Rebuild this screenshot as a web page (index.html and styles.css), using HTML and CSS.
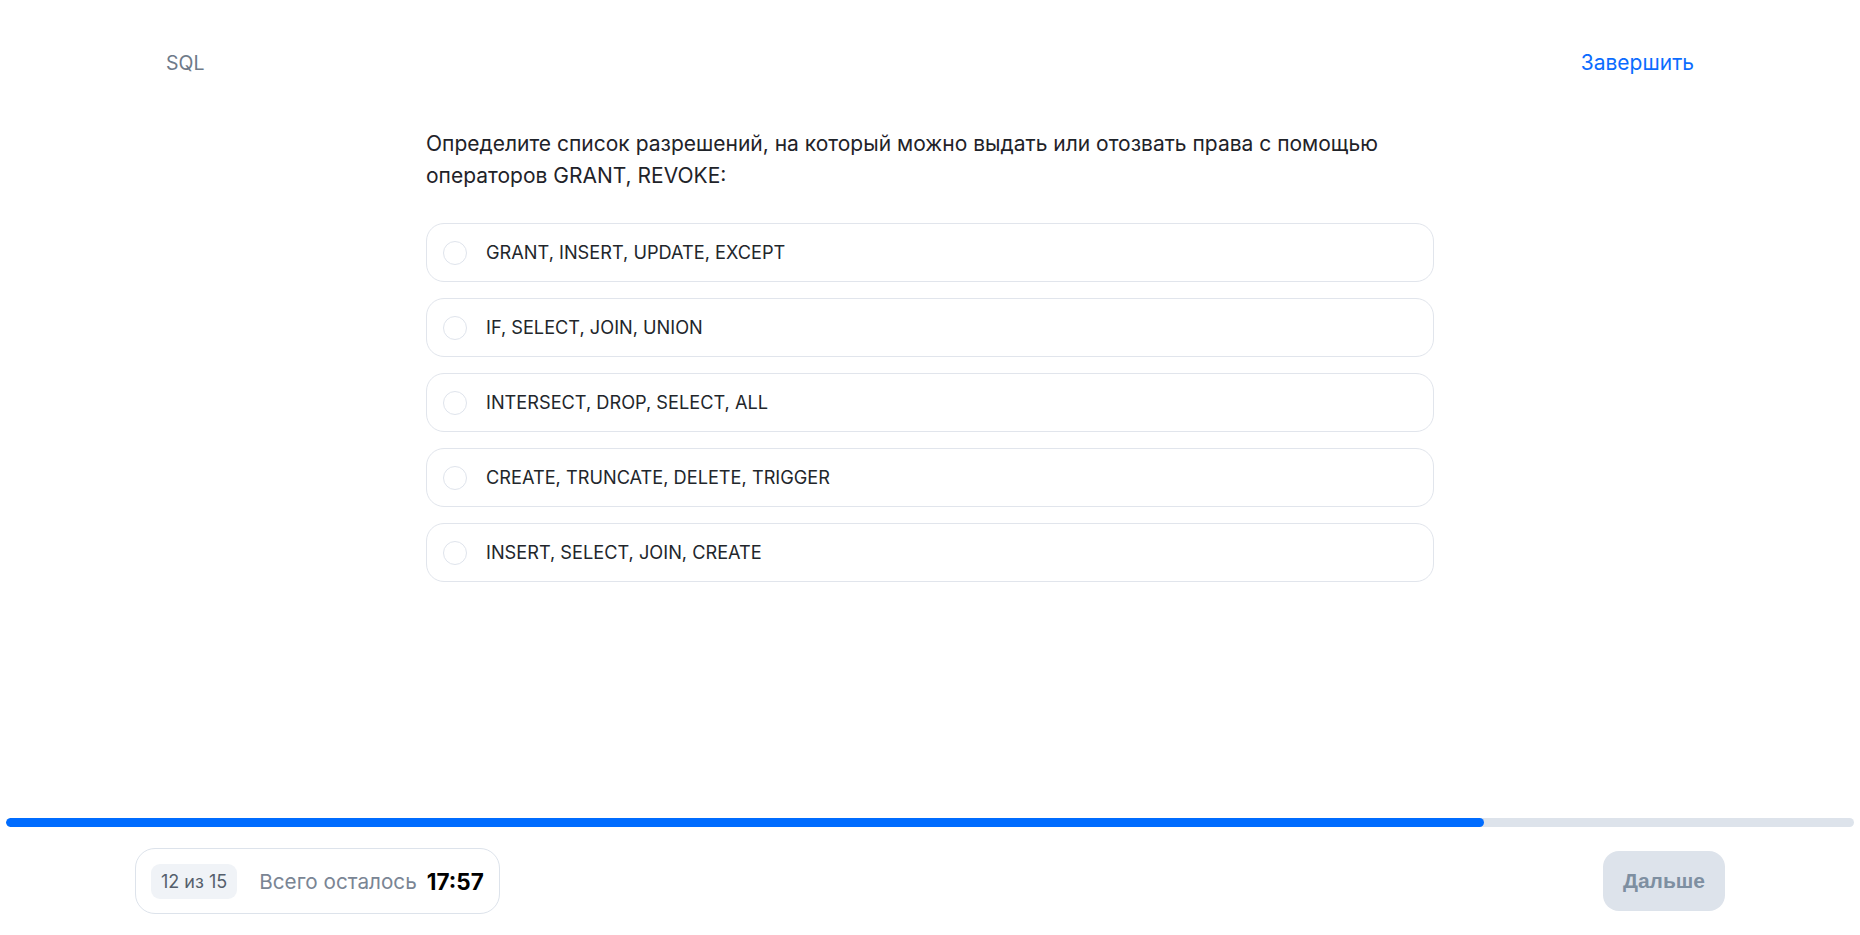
FILE: index.html
```html
<!DOCTYPE html>
<html lang="ru">
<head>
<meta charset="utf-8">
<title>SQL тест</title>
<link rel="stylesheet" href="styles.css">
</head>
<body>
<div class="page">
  <header class="header">
    <span class="subject">SQL</span>
    <a class="finish" href="#">Завершить</a>
  </header>
  <main class="main">
    <div class="quiz">
      <p class="question">Определите список разрешений, на который можно выдать или отозвать права с помощью операторов GRANT, REVOKE:</p>
      <ul class="options">
        <li class="option"><span class="radio"></span><span class="label">GRANT, INSERT, UPDATE, EXCEPT</span></li>
        <li class="option"><span class="radio"></span><span class="label">IF, SELECT, JOIN, UNION</span></li>
        <li class="option"><span class="radio"></span><span class="label">INTERSECT, DROP, SELECT, ALL</span></li>
        <li class="option"><span class="radio"></span><span class="label">CREATE, TRUNCATE, DELETE, TRIGGER</span></li>
        <li class="option"><span class="radio"></span><span class="label">INSERT, SELECT, JOIN, CREATE</span></li>
      </ul>
    </div>
  </main>
  <div class="progress"><div class="progress-fill" style="width: 80%"></div></div>
  <footer class="footer">
    <div class="status">
      <span class="counter">12 из 15</span>
      <span class="remain">Всего осталось</span>
      <span class="time">17:57</span>
    </div>
    <button class="next" type="button">Дальше</button>
  </footer>
</div>
</body>
</html>
```

FILE: styles.css
```css
* { box-sizing: border-box; }
html, body { margin: 0; padding: 0; background: #fff; }
body {
  font-family: Inter, "Noto Sans", sans-serif;
  color: #1f2329;
}
.page {
  height: 100vh;
  display: flex;
  flex-direction: column;
}
.header {
  display: flex;
  justify-content: space-between;
  align-items: center;
  padding: 50px 166px 0 166px;
  height: 76px;
  line-height: 26px;
}
.subject { color: #6e7a89; font-size: 19.5px; }
.finish { color: #0b6cff; text-decoration: none; font-size: 21px; }
.main {
  flex: 1;
  display: flex;
  justify-content: center;
  padding-top: 52px;
}
.quiz { width: 1008px; }
.question {
  margin: 0 0 31px 0;
  font-size: 21px;
  line-height: 32px;
  color: #1f2329;
  padding-right: 40px;
}
.options {
  list-style: none;
  margin: 0;
  padding: 0;
  display: flex;
  flex-direction: column;
  gap: 16px;
}
.option {
  height: 59px;
  border: 1px solid #e1e5ec;
  border-radius: 18px;
  display: flex;
  align-items: center;
  padding-left: 16px;
  gap: 19px;
}
.radio {
  width: 24px;
  height: 24px;
  border: 1.5px solid #dfe4ec;
  border-radius: 50%;
  flex: none;
}
.label {
  font-size: 18.2px;
  line-height: 24px;
  color: #22262b;
  margin-top: -2px;
}
.progress {
  margin: 0 6px;
  height: 9px;
  border-radius: 5px;
  background: #dde3eb;
  overflow: hidden;
}
.progress-fill {
  height: 100%;
  background: #006cff;
  border-radius: 5px;
}
.footer {
  display: flex;
  justify-content: space-between;
  align-items: center;
  padding: 21px 135px 21px 135px;
}
.status {
  height: 66px;
  border: 1px solid #dde3eb;
  border-radius: 20px;
  display: flex;
  align-items: center;
  padding: 0 15px 0 15px;
}
.counter {
  background: #f0f3f7;
  border-radius: 9px;
  height: 35px;
  padding: 0 10px;
  display: flex;
  align-items: center;
  font-size: 18px;
  color: #555f6c;
  margin-right: 22px;
}
.remain {
  font-size: 20.7px;
  color: #7a8594;
  margin-right: 10px;
}
.time {
  font-size: 22.5px;
  font-weight: 700;
  color: #000;
}
.next {
  width: 122px;
  height: 60px;
  border: none;
  border-radius: 16px;
  background: #dde3eb;
  color: #7e8fa1;
  font-family: "Liberation Sans", Arial, sans-serif;
  font-weight: 700;
  font-size: 21px;
  padding: 0;
}
```
